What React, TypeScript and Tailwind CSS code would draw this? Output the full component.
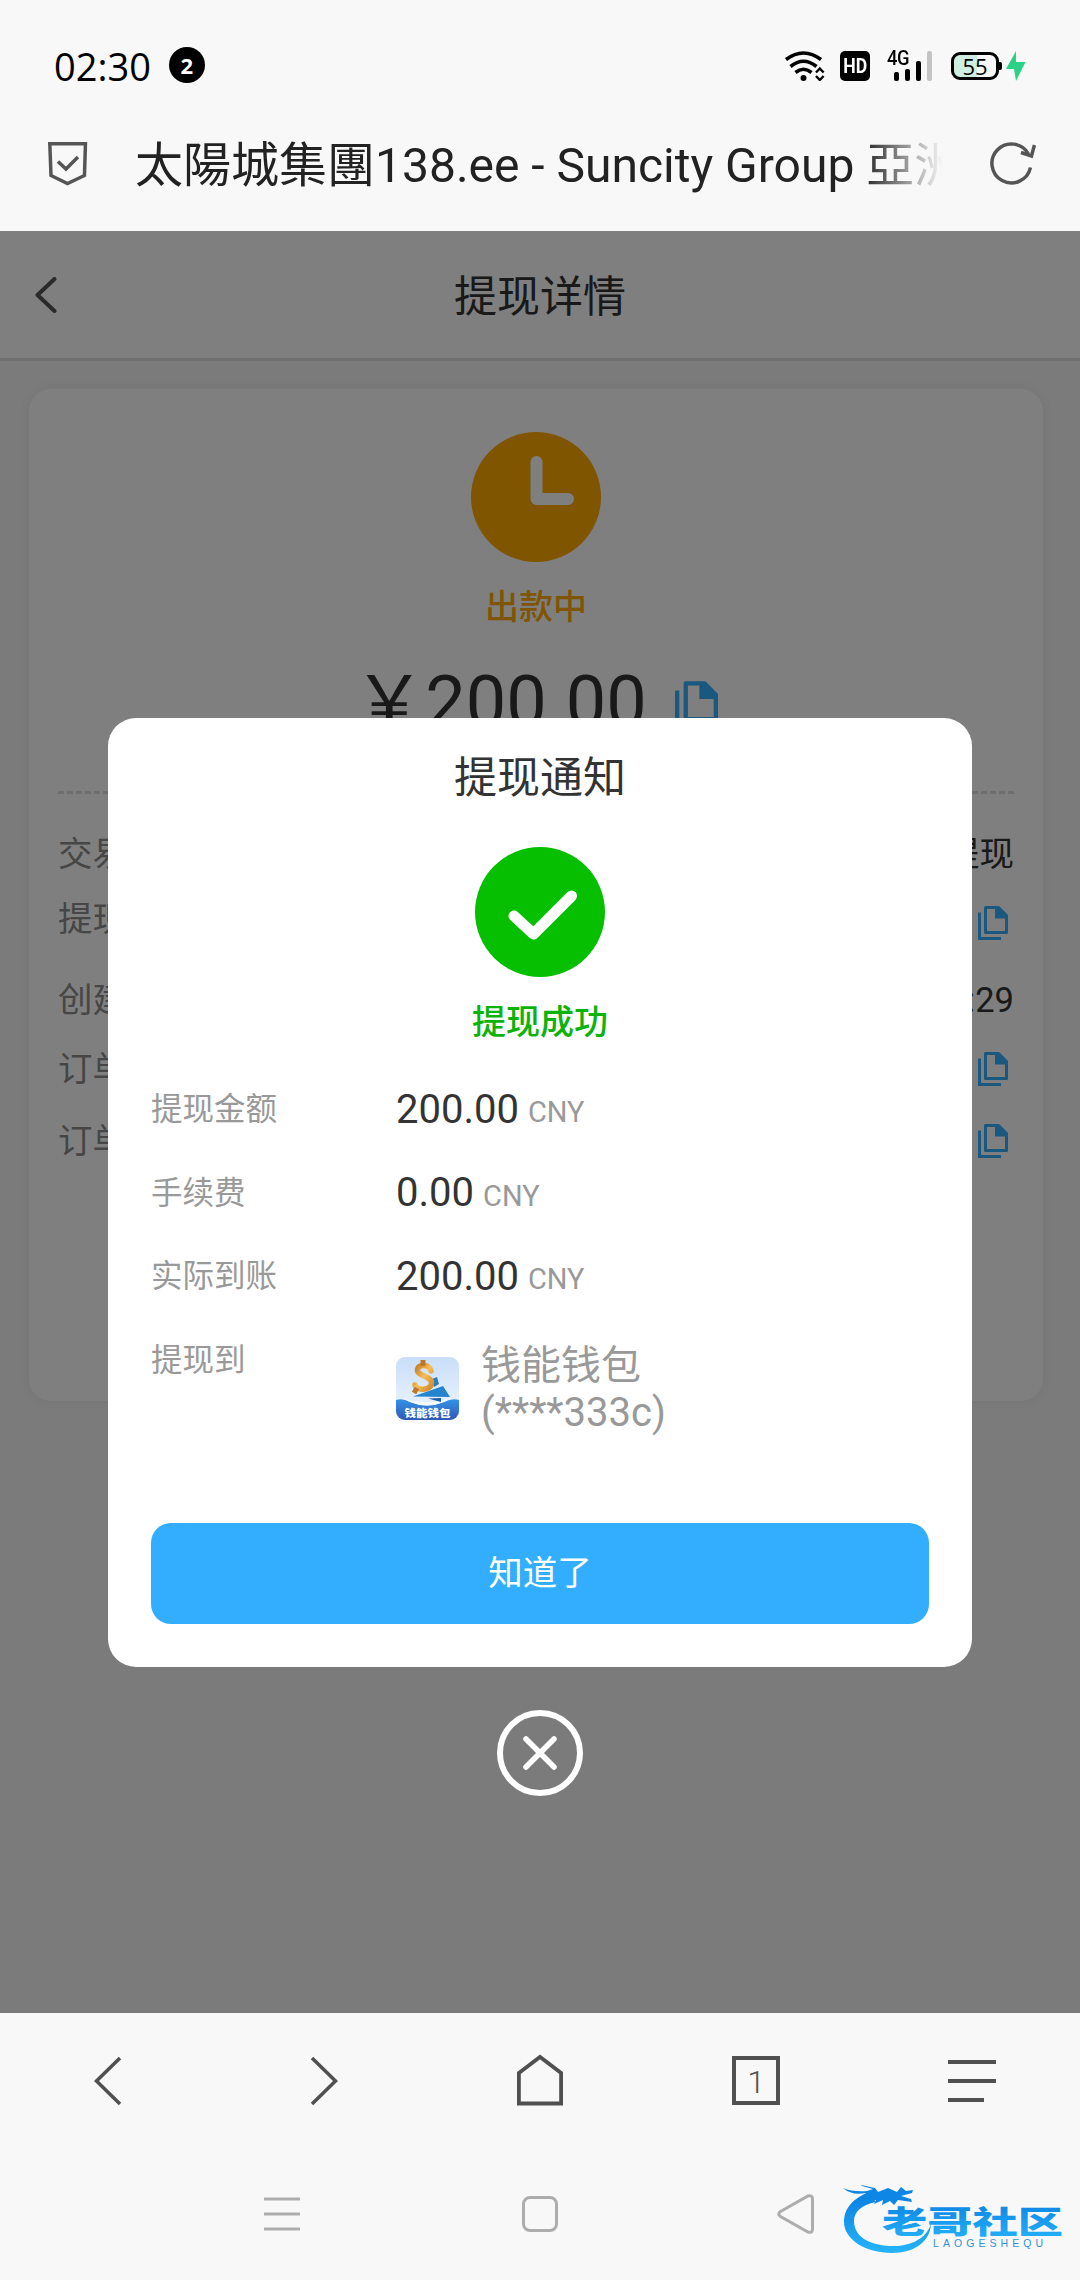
import React from 'react';

const FONT = "font-[Roboto,'Noto_Sans_CJK_SC',sans-serif]";

interface CopyIconProps {
  className?: string;
}

const CopyIcon: React.FC<CopyIconProps> = ({ className }) => (
  <svg viewBox="0 0 30 34" className={className} fill="none">
    <path d="M1.5 6.5V32.5H23" stroke="#34b0ff" strokeWidth="3" />
    <path d="M7.5 1.5H20.5L28.5 9.5V26.5H7.5Z" stroke="#34b0ff" strokeWidth="3" strokeLinejoin="round" />
    <path d="M17 1H21.5L29.5 9.5V12.5H17Z" fill="#34b0ff" />
  </svg>
);

const StatusBar: React.FC = () => (
  <div className="flex h-[96px] items-center justify-between pl-[54px] pr-[54px] pt-[36px]">
    <div className="flex items-center gap-[18px]">
      <span className="font-['Open_Sans',sans-serif] text-[38px] leading-[44px] text-black">02:30</span>
      <span className="mb-[3px] flex size-[36px] items-center justify-center rounded-full bg-black font-['Open_Sans',sans-serif] text-[22px] font-bold leading-none text-white">
        2
      </span>
    </div>
    <div className="flex items-center">
      <svg width="42" height="30" viewBox="0 0 42 30" fill="none" stroke="#000">
        <path d="M2 8.5Q19.500 -4.500 37 8.500" strokeWidth="3.600" />
        <path d="M6.500 15.500Q19.500 5 32.500 15.500" strokeWidth="3.600" />
        <path d="M11.500 21.500Q19.500 15 27.500 21.500" strokeWidth="3.600" />
        <circle cx="19.500" cy="27" r="3" fill="#000" stroke="none" />
        <path d="M32 21.500L35.800 17.500L39.600 21.500M32 25L35.800 29L39.600 25" strokeWidth="2.400" />
      </svg>
      <span className="ml-[14px] flex h-[30px] w-[30px] items-center justify-center rounded-[5px] bg-black font-['Roboto',sans-serif] text-[21px] font-bold leading-none text-white">
        <span className="scale-x-[.84]">HD</span>
      </span>
      <div className="relative ml-[23px] flex h-[30px] items-end gap-[6px] pl-px">
        <span className="absolute -left-[6px] -top-[3px] origin-left scale-x-[.92] font-['Roboto',sans-serif] text-[20px] font-medium leading-[20px] tracking-[-0.5px] text-black">4G</span>
        <span className="h-[9px] w-[5px] rounded-[2px] bg-black" />
        <span className="h-[12px] w-[5px] rounded-[2px] bg-black" />
        <span className="h-[20px] w-[5px] rounded-[2px] bg-black" />
        <span className="h-[30px] w-[5px] rounded-[2px] bg-[#c4c4c4]" />
      </div>
      <div className="ml-[19px] flex items-center">
        <div className="flex h-[28px] w-[48px] items-center justify-center rounded-[9px] border-[3px] border-black bg-[linear-gradient(90deg,#cdeee0_55%,#f8f8f8_55%)] font-['Open_Sans',sans-serif] text-[22px] leading-none text-black">
          55
        </div>
        <div className="h-[8px] w-[3px] rounded-r-[2px] bg-black" />
      </div>
      <svg className="ml-[4px]" width="20" height="30" viewBox="0 0 20 30">
        <path d="M10 0L0 18H8L10 30L19.500 11H10Z" fill="#2bd184" />
      </svg>
    </div>
  </div>
);

const AddressBar: React.FC = () => (
  <div className="flex h-[135px] items-start pl-[48px] pr-[44px]">
    <svg className="mt-[46px]" width="40" height="44" viewBox="0 0 40 44" fill="none" stroke="#555">
      <path d="M1.800 1.800H37.500L36.500 33.500L19.500 41.500L3 33.500Z" strokeWidth="3.500" />
      <path d="M10 19.500L18 27L30 15" strokeWidth="3.500" />
    </svg>
    <div className="ml-[47px] mt-[38px] w-[809px] overflow-hidden whitespace-nowrap text-[48px] leading-[64px] text-[#222] [mask-image:linear-gradient(90deg,#000_90%,transparent)]">
      <span className="font-[Roboto,'Noto_Sans_CJK_TC',sans-serif]">太陽城集團138.ee - Suncity Group 亞洲</span>
    </div>
    <svg className="ml-[47px] mt-[46px]" width="46" height="44" viewBox="0 0 46 44" fill="none" stroke="#555" strokeWidth="3.500">
      <path d="M40.500 25.500A19.500 19.500 0 1 1 38.500 12" />
      <path d="M31 10.500L41.500 14L44.500 3" />
    </svg>
  </div>
);

const detailRows = [
  { label: '交易', value: '提现', height: 'h-[68px]' },
  { label: '提现', height: 'h-[70px]', pad: 'pb-[8px]' },
  { label: '创建', value: ':29', height: 'h-[79px]', pad: 'pt-[5px]' },
  { label: '订单', height: 'h-[64px]' },
  { label: '订单', height: 'h-[80px]' }
];

const DetailPage: React.FC = () => (
  <div className="flex h-full flex-col bg-[#f6f6f6]">
    <div className="flex h-[130px] items-center border-b-[3px] border-[#e0e0e0] bg-white">
      <svg className="ml-[35px]" width="22" height="36" viewBox="0 0 22 36" fill="none">
        <path d="M19.500 2L2.500 18L19.500 34" stroke="#555" strokeWidth="4" strokeLinecap="round" strokeLinejoin="round" />
      </svg>
      <h1 className="ml-[-57px] flex-1 pt-[5px] text-center text-[43px] leading-none text-[#333]">提现详情</h1>
    </div>
    <div className="ml-[29px] mt-[28px] flex h-[1012px] w-[1014px] flex-col items-center rounded-[22px] bg-white px-[29px] pt-[43px] shadow-[0_0_12px_rgba(0,0,0,0.06)]">
      <svg width="130" height="130" viewBox="0 0 130 130">
        <circle cx="65" cy="65" r="65" fill="#ffaa00" />
        <path d="M65.500 30V67H97" stroke="#fff" strokeWidth="12" strokeLinecap="round" strokeLinejoin="round" fill="none" />
      </svg>
      <div className="mt-[27px] text-[34px] font-medium leading-[36px] text-[#ffaa00]">出款中</div>
      <div className="mt-[34px] flex h-[88px] items-center">
        <span className="ml-[-1px] text-[72px] leading-[88px] text-[#333]">￥200.00</span>
        <CopyIcon className="ml-[28px] mt-[4px] h-[49px] w-[43px]" />
      </div>
      <div className="mt-[44px] w-full border-t-[3px] border-dashed border-[#ddd]" />
      <div className="mt-[26px] w-full">
        {detailRows.map((row, idx) => (
          <div key={idx} className={`flex items-center justify-between text-[34.5px] leading-none ${row.height}`}>
            <span className={`text-[#8c8c8c] ${row.pad ?? ''}`}>{row.label}</span>
            {row.value ? (
              <span className={`text-[#333] ${row.pad ?? ''}`}>{row.value}</span>
            ) : (
              <CopyIcon className="mr-[6px] h-[34px] w-[30px]" />
            )}
          </div>
        ))}
      </div>
    </div>
  </div>
);

const WalletIcon: React.FC = () => (
  <svg width="63" height="63" viewBox="0 0 63 63">
    <defs>
      <linearGradient id="sky" x1="0" y1="0" x2="0" y2="1">
        <stop offset="0" stopColor="#c9def8" />
        <stop offset="1" stopColor="#f0f7ff" />
      </linearGradient>
      <linearGradient id="wave" x1="0" y1="0" x2="0" y2="1">
        <stop offset="0" stopColor="#3592e8" />
        <stop offset="1" stopColor="#2f58b4" />
      </linearGradient>
      <linearGradient id="gold" x1="0" y1="0" x2="1" y2="1">
        <stop offset="0" stopColor="#c07a25" />
        <stop offset="0.5" stopColor="#f6bd56" />
        <stop offset="1" stopColor="#cf8a30" />
      </linearGradient>
      <clipPath id="tile">
        <rect width="63" height="63" rx="9" />
      </clipPath>
    </defs>
    <g clipPath="url(#tile)">
      <rect width="63" height="63" fill="url(#sky)" />
      <path d="M0 43Q7 41 14 45Q31 52 48 45Q56 41 63 43V63H0Z" fill="url(#wave)" />
      <path d="M6 41Q30 50 57 40L48 45Q31 52 14 45Z" fill="#f4f9ff" />
      <path d="M36 22L41 20L43 27L38 30Z" fill="#2b7bc0" />
      <path d="M17 39.500L47 29L54 40Z" fill="#2484cf" />
      <path d="M32 41.500L45 41V45Z" fill="#1c5fae" />
      <path d="M35 14C34 7 22 6.500 21.500 13C21 19 36 19 35.500 26C35 34 20 34 19 28" stroke="url(#gold)" strokeWidth="5.500" fill="none" strokeLinecap="round" />
      <path d="M27 3V9M21 31L18 36" stroke="#b9782a" strokeWidth="5" />
      <text x="8.500" y="60" textLength="46" lengthAdjust="spacingAndGlyphs" fontSize="10.500" fontWeight="900" fill="#fff" fontFamily="Noto Sans CJK SC, sans-serif">
        钱能钱包
      </text>
    </g>
  </svg>
);

const amounts = [
  { label: '提现金额', value: '200.00' },
  { label: '手续费', value: '0.00' },
  { label: '实际到账', value: '200.00' }
];

const NoticeModal: React.FC = () => (
  <div className="flex h-[949px] w-[864px] flex-col rounded-[28px] bg-white px-[43px]">
    <h2 className="mt-[35px] text-center text-[43px] leading-[50px] text-[#333]">提现通知</h2>
    <svg className="mx-auto mt-[44px]" width="130" height="130" viewBox="0 0 130 130">
      <circle cx="65" cy="65" r="65" fill="#06c000" />
      <path d="M39 69L58.500 87L96.500 49" stroke="#fff" strokeWidth="11" strokeLinecap="round" strokeLinejoin="round" fill="none" />
    </svg>
    <div className="mt-[27px] text-center text-[34px] font-medium leading-[36px] text-[#0bb30a]">提现成功</div>
    <div className="mt-[28px]">
      {amounts.map((row) => (
        <div key={row.label} className="flex h-[83.5px] items-center">
          <span className="w-[245px] text-[31.5px] leading-none text-[#999]">{row.label}</span>
          <span className="text-[40px] leading-none text-[#333]">{row.value}</span>
          <span className="ml-[9px] mt-[6px] text-[29px] leading-none text-[#999]">CNY</span>
        </div>
      ))}
      <div className="flex items-start">
        <span className="w-[245px] pt-[26px] text-[31.5px] leading-none text-[#999]">提现到</span>
        <div className="flex items-center pt-[23px]">
          <WalletIcon />
          <span className="ml-[22px] text-[40px] leading-[47px] text-[#999]">
            钱能钱包
            <br />
            (****333c)
          </span>
        </div>
      </div>
    </div>
    <button className="mb-[43px] mt-auto h-[101px] w-full rounded-[20px] bg-[#33aeff] text-[34.5px] leading-none text-white">知道了</button>
  </div>
);

const BrowserNav: React.FC = () => (
  <div className="grid h-[135px] grid-cols-5 place-items-center text-[#505050]">
    <svg width="28" height="50" viewBox="0 0 28 50" fill="none" stroke="currentColor" strokeWidth="3.500">
      <path d="M26 2L2.500 25L26 48" />
    </svg>
    <svg width="28" height="50" viewBox="0 0 28 50" fill="none" stroke="currentColor" strokeWidth="3.500">
      <path d="M2 2L25.500 25L2 48" />
    </svg>
    <svg className="mb-[2px]" width="46" height="52" viewBox="0 0 46 52" fill="none" stroke="currentColor" strokeWidth="3.800">
      <path d="M1.900 19L23 3L44.100 19V49.500H1.900Z" />
    </svg>
    <div className="flex h-[49px] w-[48px] items-center justify-center border-4 border-current">
      <span className="pt-[2px] text-[32px] font-light leading-none">1</span>
    </div>
    <svg width="48" height="44" viewBox="0 0 48 44" stroke="currentColor" strokeWidth="4">
      <path d="M0 3H48M0 22H48M0 41H36" />
    </svg>
  </div>
);

const SystemNav: React.FC = () => (
  <div className="flex h-[132px] items-center pl-[264px] text-[#adadad]">
    <svg width="36" height="34" viewBox="0 0 36 34" stroke="currentColor" strokeWidth="3">
      <path d="M0 2H36M0 17H36M0 32H36" />
    </svg>
    <div className="ml-[222px] size-[36px] rounded-[8px] border-[3px] border-current" />
    <svg className="ml-[219px]" width="38" height="42" viewBox="0 0 38 42" fill="none" stroke="currentColor" strokeWidth="3">
      <path d="M3.500 18.500L31 3Q35.500 2 35.500 6V36Q35.500 40.500 31 39L3.500 23.500Q0 21 3.500 18.500Z" />
    </svg>
  </div>
);

const CommunityLogo: React.FC = () => (
  <svg className="absolute bottom-[20px] right-[14px]" width="226" height="84" viewBox="0 0 226 84">
    <defs>
      <linearGradient id="logoBlue" x1="0" y1="0" x2="0" y2="1">
        <stop offset="0" stopColor="#0a7fe0" />
        <stop offset="1" stopColor="#25b4fa" />
      </linearGradient>
    </defs>
    {/* dragon body, then head and whiskers */}
    <path d="M27 17C10 24 4 35 4 46C4 63 25 77 52 77C74 77 90 66 91 48C86 63 70 71 50 70C28 69 14 60 14 45C14 36 21 29 36 26Z" fill="url(#logoBlue)" />
    <path d="M3 12Q12 16 27 15L33 13L22 10L21 9L35 12L38 16L48 12L57 16L61 11L66 15L73 14L72 17L61 20L71 23L72 26L58 24L54 29L50 25L42 29L43 24L34 28L36 24L27 27L31 21L22 22L26 17Q12 20 3 12Z" fill="#0d86e6" />
    <text x="42" y="57" textLength="181" lengthAdjust="spacingAndGlyphs" fontSize="31" fontWeight="900" fill="url(#logoBlue)" fontFamily="Noto Sans CJK SC, sans-serif">
      老哥社区
    </text>
    <text x="93" y="71" textLength="110" fontSize="10.500" fill="#2f93d8" fontFamily="Liberation Sans, sans-serif">
      LAOGESHEQU
    </text>
  </svg>
);

export default function App() {
  return (
    <div className={`relative flex h-[2280px] w-[1080px] flex-col overflow-hidden bg-[#f8f8f8] ${FONT}`}>
      <StatusBar />
      <AddressBar />
      <main className="relative h-[1782px]">
        <DetailPage />
        <div className="absolute inset-0 flex flex-col items-center bg-black/50 pt-[487px]">
          <NoticeModal />
          <svg className="mt-[43px]" width="86" height="86" viewBox="0 0 86 86" fill="none" stroke="#fff">
            <circle cx="43" cy="43" r="40" strokeWidth="6" />
            <path d="M29 29L57 57M57 29L29 57" strokeWidth="5.500" strokeLinecap="round" />
          </svg>
        </div>
      </main>
      <BrowserNav />
      <SystemNav />
      <CommunityLogo />
    </div>
  );
}
